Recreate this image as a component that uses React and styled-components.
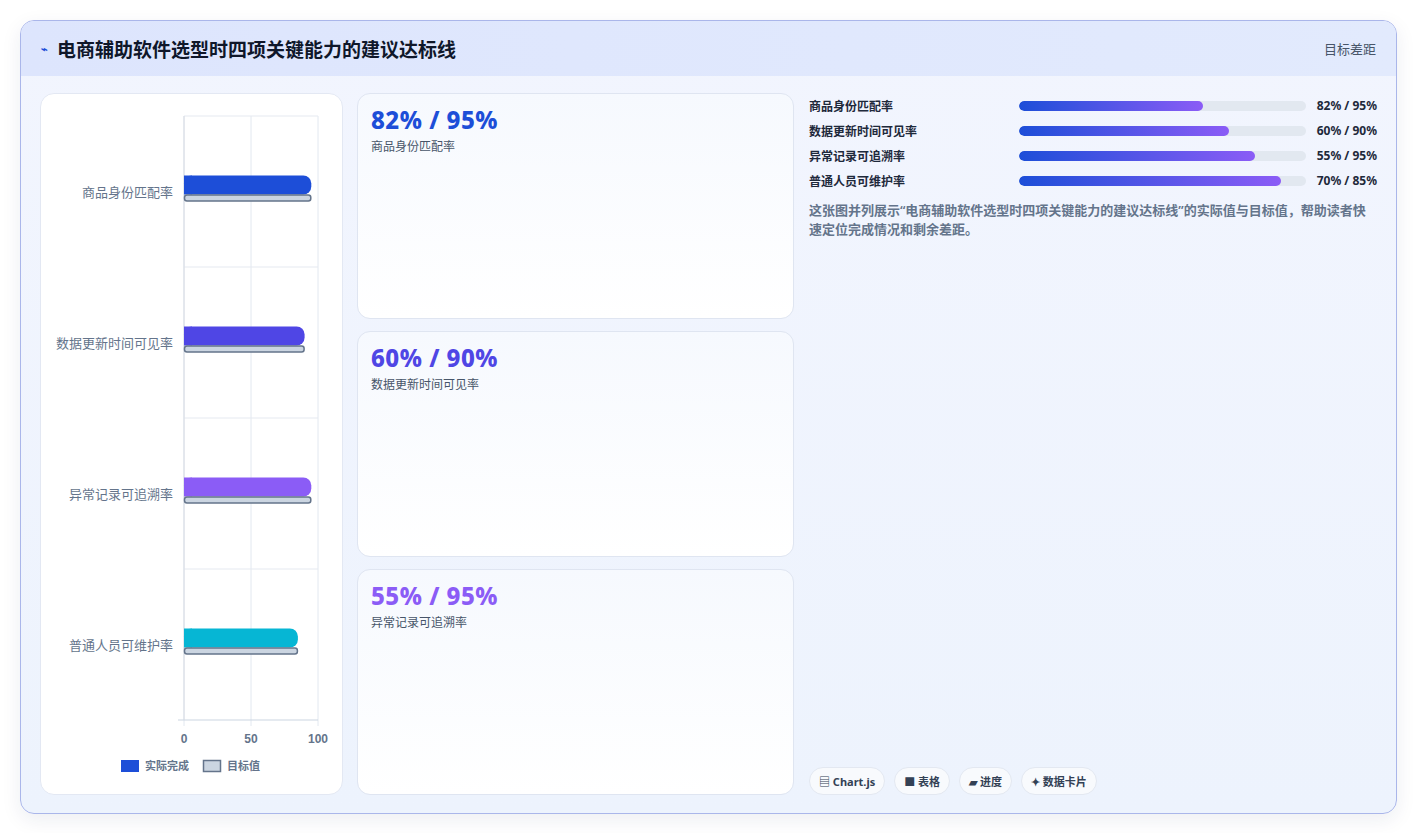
import React from "react";
import styled, { createGlobalStyle } from "styled-components";

const Global = createGlobalStyle`
  html,body{margin:0;background:#fff;}
  body{font-family:"Noto Sans","Noto Sans CJK SC",sans-serif;}
`;
const Page = styled.div`padding:20px 20px 19px 20px;width:1417px;box-sizing:border-box;`;
const Card = styled.div`
  width:1377px;height:794px;box-sizing:border-box;border:1px solid #aab6ea;border-radius:14px;
  overflow:hidden;display:flex;flex-direction:column;
  background:linear-gradient(180deg,#f2f5fe,#edf3fd);
  box-shadow:0 6px 20px rgba(30,40,90,0.08);
`;
const Header = styled.div`
  height:55px;flex:none;display:flex;align-items:center;justify-content:space-between;
  padding:0 20px;background:linear-gradient(90deg,#dde5fd,#e2eafd);
`;
const Title = styled.h1`margin:0;font-size:19px;font-weight:700;color:#0f172a;display:flex;align-items:center;gap:9px;`;
const Icon = styled.span`font-size:11px;color:#1d4ed8;`;
const HeadRight = styled.span`font-size:13px;color:#475569;`;
const Body = styled.div`flex:1;display:flex;gap:14px;padding:17px 19px 18px 19px;min-height:0;`;
const ChartPanel = styled.div`width:303px;flex:none;background:#fff;border:1px solid #e3e8f3;border-radius:14px;box-sizing:border-box;position:relative;`;
const Cards = styled.div`width:437px;flex:none;display:flex;flex-direction:column;gap:12px;`;
const Stat = styled.div`
  flex:1;border:1px solid #dfe5f1;border-radius:13px;padding:10px 13px;
  background:linear-gradient(180deg,#f6f9fe,#fff);
`;
const Big = styled.div`font-size:24px;font-weight:800;color:${p=>p.c};line-height:32px;letter-spacing:0.5px;font-family:"Noto Sans","Noto Sans CJK SC",sans-serif;`;
const Small = styled.div`font-size:12px;color:#475569;margin-top:1px;`;
const Right = styled.div`flex:1;display:flex;flex-direction:column;padding-left:1px;`;
const Row = styled.div`display:flex;align-items:center;height:25px;font-size:12px;font-weight:700;color:#1e293b;`;
const RLabel = styled.span`width:210px;`;
const Track = styled.div`width:287px;height:10px;border-radius:5px;background:#e2e8f0;overflow:hidden;`;
const Fill = styled.div`height:100%;border-radius:5px;background:linear-gradient(90deg,#1d4ed8,#8b5cf6);`;
const RVal = styled.span`flex:1;text-align:right;`;
const Desc = styled.p`margin:8px 0 0;font-size:13px;line-height:19px;font-weight:600;color:#64748b;`;
const Chips = styled.div`margin-top:auto;display:flex;gap:9px;`;
const Chip = styled.span`height:28px;box-sizing:border-box;padding:0 9px;border-radius:14px;border:1px solid #e3e8f1;background:#f8fafd;font-size:11px;font-weight:700;color:#334155;display:flex;align-items:center;gap:3px;`;

const cats=[["商品身份匹配率","#1d4ed8",95,95],["数据更新时间可见率","#4f46e5",90,90],["异常记录可追溯率","#8b5cf6",95,95],["普通人员可维护率","#06b6d4",85,85]];
const Chart=()=>{
  const x0=143,w=134,y0=22,h=151;
  return <svg width="303" height="701" style={{display:"block"}}>
    {[0,50,100].map(v=><line key={v} x1={x0+v/100*w} x2={x0+v/100*w} y1={y0} y2={y0+4*h+6} stroke="#e2e8f0"/>)}
    {[0,1,2,3,4].map(i=><line key={i} x1={i===4?137:x0} x2={x0+w} y1={y0+i*h} y2={y0+i*h} stroke={i===4?"#cbd5e1":"#e5e9f0"}/>)}
    <line x1={x0} x2={x0} y1={y0} y2={y0+4*h} stroke="#d7dce4"/>
    {cats.map(([n,c,a,t],i)=>{const cy=y0+i*h+h/2;return <g key={n}>
      <text x="132" y={cy+5} textAnchor="end" fontSize="13" fill="#64748b">{n}</text>
      <rect x={x0} y={cy-16} width={a/100*w} height="19" rx="8" fill={c}/>
      <rect x={x0} y={cy-16} width="8" height="19" fill={c}/>
      <rect x={x0+0.5} y={cy+3.5} width={t/100*w-1} height="6" rx="2.5" fill="#cbd5e1" stroke="#64748b" strokeWidth="1.5"/>
    </g>})}
    {[0,50,100].map(v=><text key={v} x={x0+v/100*w} y={y0+4*h+23} textAnchor="middle" fontSize="12" fontWeight="700" fill="#64748b" fontFamily="Liberation Sans">{v}</text>)}
    <rect x="80" y="666" width="18" height="12" fill="#1d4ed8"/>
    <text x="104" y="676" fontSize="11" fontWeight="600" fill="#64748b">实际完成</text>
    <rect x="162.5" y="666.5" width="17" height="11" fill="#cbd5e1" stroke="#64748b" strokeWidth="1.5"/>
    <text x="186" y="676" fontSize="11" fontWeight="600" fill="#64748b">目标值</text>
  </svg>;
};

export default function App(){
  return <Page><Global/><Card>
    <Header><Title><Icon>⌁</Icon>电商辅助软件选型时四项关键能力的建议达标线</Title><HeadRight>目标差距</HeadRight></Header>
    <Body>
      <ChartPanel><Chart/></ChartPanel>
      <Cards>
        <Stat><Big c="#1d4ed8">82% / 95%</Big><Small>商品身份匹配率</Small></Stat>
        <Stat><Big c="#4f46e5">60% / 90%</Big><Small>数据更新时间可见率</Small></Stat>
        <Stat><Big c="#8b5cf6">55% / 95%</Big><Small>异常记录可追溯率</Small></Stat>
      </Cards>
      <Right>
        {[["商品身份匹配率",184,"82% / 95%"],["数据更新时间可见率",210,"60% / 90%"],["异常记录可追溯率",236,"55% / 95%"],["普通人员可维护率",262,"70% / 85%"]].map(([l,f,v])=>
          <Row key={l}><RLabel>{l}</RLabel><Track><Fill style={{width:f}}/></Track><RVal>{v}</RVal></Row>)}
        <Desc>这张图并列展示“电商辅助软件选型时四项关键能力的建议达标线”的实际值与目标值，帮助读者快速定位完成情况和剩余差距。</Desc>
        <Chips><Chip>▤ Chart.js</Chip><Chip>■ 表格</Chip><Chip>▰ 进度</Chip><Chip>✦ 数据卡片</Chip></Chips>
      </Right>
    </Body>
  </Card></Page>;
}
